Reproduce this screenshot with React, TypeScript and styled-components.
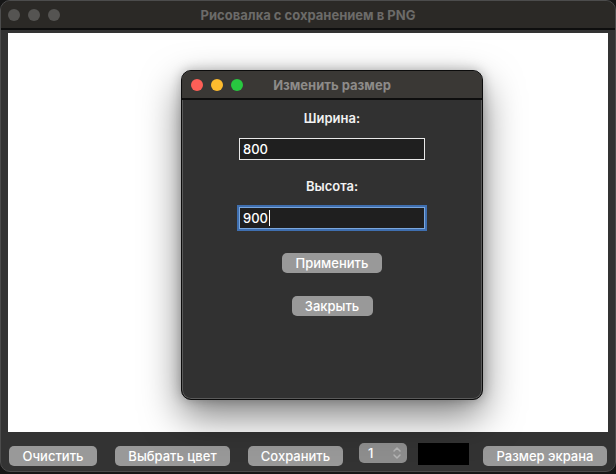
import React from "react";
import styled, { createGlobalStyle } from "styled-components";

const Global = createGlobalStyle`
  html, body { margin: 0; padding: 0; background: #161616; }
  body { font-family: Inter, "Noto Sans", "Liberation Sans", sans-serif; -webkit-font-smoothing: antialiased; }
  * { box-sizing: border-box; }
`;

const Window = styled.div`
  position: relative;
  width: 616px;
  height: 472px;
  background: #333333;
  border-radius: 10px;
  border: 1px solid #4c4c4c;
  overflow: hidden;
  display: flex;
  flex-direction: column;
`;

const TitleBar = styled.div<{ $bg: string; $h: number }>`
  height: ${(p) => p.$h}px;
  flex: none;
  background: ${(p) => p.$bg};
  border-bottom: 2px solid #0e0e0e;
  display: grid;
  grid-template-columns: 1fr auto 1fr;
  align-items: center;
`;

const Lights = styled.div<{ $pad: number }>`
  display: flex;
  gap: 8px;
  padding-left: ${(p) => p.$pad}px;
`;

const Light = styled.span<{ $c: string }>`
  width: 12px;
  height: 12px;
  border-radius: 50%;
  background: ${(p) => p.$c};
`;

const Title = styled.div<{ $c: string }>`
  font-size: 13px;
  font-weight: 700;
  color: ${(p) => p.$c};
  white-space: nowrap;
`;

const Canvas = styled.div`
  flex: none;
  margin: 3px 7px 0 7px;
  height: 399px;
  background: #ffffff;
`;

const Toolbar = styled.div`
  display: flex;
  align-items: flex-start;
  padding-left: 8px;
`;

const Btn = styled.button<{ $w: number; $ml?: number; $mt?: number }>`
  width: ${(p) => p.$w}px;
  height: 20px;
  margin-left: ${(p) => p.$ml ?? 0}px;
  margin-top: ${(p) => p.$mt ?? 0}px;
  border: none;
  border-radius: 5px;
  background: #999999;
  color: #ffffff;
  font-family: inherit;
  font-size: 13px;
  font-weight: 500;
  padding: 0;
  display: flex;
  align-items: center;
  justify-content: center;
`;

const Spin = styled.div<{ $ml: number }>`
  width: 48px;
  height: 20px;
  margin-left: ${(p) => p.$ml}px;
  margin-top: 11px;
  border-radius: 5px;
  background: #8e8e8e;
  color: #fff;
  font-size: 13px;
  font-weight: 500;
  display: flex;
  align-items: center;
  justify-content: space-between;
  padding: 0 5px 0 9px;
`;

const Swatch = styled.div<{ $ml: number }>`
  width: 51px;
  height: 22px;
  margin-left: ${(p) => p.$ml}px;
  margin-top: 11px;
  background: #000;
`;

const Dialog = styled.div`
  position: absolute;
  left: 180px;
  top: 69px;
  width: 302px;
  height: 330px;
  background: #313131;
  border-radius: 10px;
  border: 1px solid #0c0c0c;
  box-shadow: inset 0 0 0 1px #5a5a5a, 0 16px 38px rgba(0, 0, 0, 0.5), 0 0 12px rgba(0,0,0,0.25);
  overflow: hidden;
  display: flex;
  flex-direction: column;
`;

const DBody = styled.div`
  display: flex;
  flex-direction: column;
  align-items: center;
`;

const Label = styled.div<{ $mt: number }>`
  margin-top: ${(p) => p.$mt}px;
  height: 16px;
  line-height: 16px;
  color: #f2f2f2;
  font-size: 13px;
  font-weight: 600;
`;

const Field = styled.div<{ $mt: number; $focus?: boolean }>`
  margin-top: ${(p) => p.$mt}px;
  width: 186px;
  height: 22px;
  background: #1f1f1f;
  border: 1px solid ${(p) => (p.$focus ? "#7aa6dc" : "#e8e8e8")};
  box-shadow: ${(p) => (p.$focus ? "0 0 0 2px #3f6fb0" : "none")};
  color: #fff;
  font-size: 13px;
  font-weight: 500;
  display: flex;
  align-items: center;
  padding-left: 3px;
`;

const Caret = styled.span`
  width: 1px;
  height: 16px;
  background: #fff;
  margin-left: 1px;
`;

export default function App() {
  return (
    <>
      <Global />
      <Window>
        <TitleBar $bg="#2b2926" $h={29}>
          <Lights $pad={7}>
            <Light $c="#555452" />
            <Light $c="#555452" />
            <Light $c="#555452" />
          </Lights>
          <Title $c="#6c6b69">Рисовалка с сохранением в PNG</Title>
          <div />
        </TitleBar>
        <Canvas />
        <Toolbar>
          <Btn $w={88} $mt={14}>Очистить</Btn>
          <Btn $w={115} $ml={18} $mt={14}>Выбрать цвет</Btn>
          <Btn $w={95} $ml={18} $mt={14}>Сохранить</Btn>
          <Spin $ml={16}>
            <span>1</span>
            <svg width="10" height="14" viewBox="0 0 10 14" fill="none" stroke="#b4b4b4" strokeWidth="1.5" strokeLinecap="round" strokeLinejoin="round">
              <path d="M2 5 L5 2 L8 5" />
              <path d="M2 9 L5 12 L8 9" />
            </svg>
          </Spin>
          <Swatch $ml={11} />
          <Btn $w={124} $ml={14} $mt={14}>Размер экрана</Btn>
        </Toolbar>
        <Dialog>
          <TitleBar $bg="#3a3835" $h={29}>
            <Lights $pad={9}>
              <Light $c="#fe5f57" />
              <Light $c="#febc2e" />
              <Light $c="#28c840" />
            </Lights>
            <Title $c="#8d8b89">Изменить размер</Title>
            <div />
          </TitleBar>
          <DBody>
            <Label $mt={10}>Ширина:</Label>
            <Field $mt={12}>800</Field>
            <Label $mt={18}>Высота:</Label>
            <Field $mt={13} $focus>
              900
              <Caret />
            </Field>
            <Btn $w={100} $mt={24}>Применить</Btn>
            <Btn $w={81} $mt={23}>Закрыть</Btn>
          </DBody>
        </Dialog>
      </Window>
    </>
  );
}
